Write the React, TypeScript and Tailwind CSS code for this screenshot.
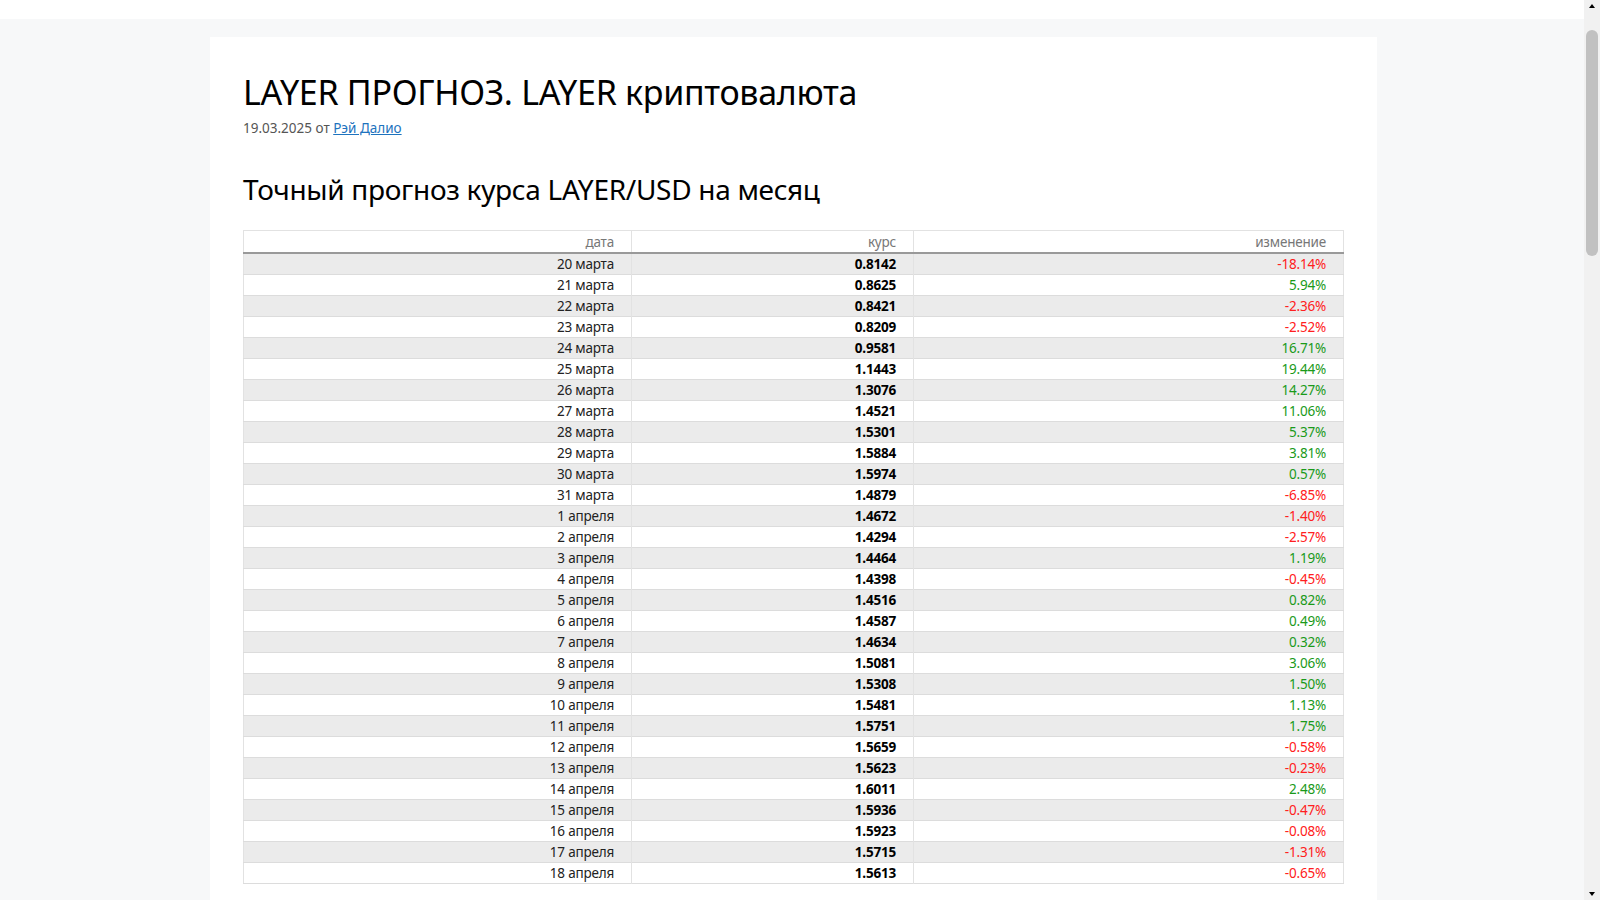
const rows: [string, string, string][] = [
  ["20 марта", "0.8142", "-18.14%"],
  ["21 марта", "0.8625", "5.94%"],
  ["22 марта", "0.8421", "-2.36%"],
  ["23 марта", "0.8209", "-2.52%"],
  ["24 марта", "0.9581", "16.71%"],
  ["25 марта", "1.1443", "19.44%"],
  ["26 марта", "1.3076", "14.27%"],
  ["27 марта", "1.4521", "11.06%"],
  ["28 марта", "1.5301", "5.37%"],
  ["29 марта", "1.5884", "3.81%"],
  ["30 марта", "1.5974", "0.57%"],
  ["31 марта", "1.4879", "-6.85%"],
  ["1 апреля", "1.4672", "-1.40%"],
  ["2 апреля", "1.4294", "-2.57%"],
  ["3 апреля", "1.4464", "1.19%"],
  ["4 апреля", "1.4398", "-0.45%"],
  ["5 апреля", "1.4516", "0.82%"],
  ["6 апреля", "1.4587", "0.49%"],
  ["7 апреля", "1.4634", "0.32%"],
  ["8 апреля", "1.5081", "3.06%"],
  ["9 апреля", "1.5308", "1.50%"],
  ["10 апреля", "1.5481", "1.13%"],
  ["11 апреля", "1.5751", "1.75%"],
  ["12 апреля", "1.5659", "-0.58%"],
  ["13 апреля", "1.5623", "-0.23%"],
  ["14 апреля", "1.6011", "2.48%"],
  ["15 апреля", "1.5936", "-0.47%"],
  ["16 апреля", "1.5923", "-0.08%"],
  ["17 апреля", "1.5715", "-1.31%"],
  ["18 апреля", "1.5613", "-0.65%"],
];

const cell = "p-0 pr-[17px] text-right leading-[20px] font-['Liberation_Sans',Arial,sans-serif]";

export default function App() {
  return (
    <div className="flex h-[900px] w-[1600px] overflow-hidden bg-[#f7f8f9] font-['Open_Sans',sans-serif]">
      <div className="flex-1">
        <div className="h-[19px] bg-white" />
        <div className="ml-[210px] mt-[18px] w-[1167px] bg-white px-[33px] pt-[33px]">
          <h1 className="text-[34px] font-normal leading-[44px] tracking-[-0.3px] text-black">
            LAYER ПРОГНОЗ. LAYER криптовалюта
          </h1>
          <p className="mt-[4px] text-[13.5px] text-[#555]">
            19.03.2025 от{" "}
            <a className="text-[#1e73be] underline" href="#">
              Рэй Далио
            </a>
          </p>
          <h2 className="mt-[31px] text-[28px] font-normal leading-[40px] tracking-[-0.3px] text-black">
            Точный прогноз курса LAYER/USD на месяц
          </h2>
          <table className="mt-[21px] w-[1101px] border-collapse border border-[#e2e2e2] text-[13.5px] tracking-[-0.2px]">
            <thead>
              <tr className="h-[22px] border-b-[2px] border-[#999] text-[#777]">
                <th className={`${cell} w-[388px] border-r border-[#e2e2e2] font-normal`}>дата</th>
                <th className={`${cell} w-[282px] border-r border-[#e2e2e2] font-normal`}>курс</th>
                <th className={`${cell} font-normal`}>изменение</th>
              </tr>
            </thead>
            <tbody>
              {rows.map(([d, r, c], i) => (
                <tr key={d} className={`h-[20px] border-b border-[#dcdcdc] ${i % 2 === 0 ? "bg-[#ebebeb]" : "bg-white"}`}>
                  <td className={`${cell} border-r border-[#e2e2e2] text-[#222]`}>{d}</td>
                  <td className={`${cell} border-r border-[#e2e2e2] font-bold text-black`}>{r}</td>
                  <td className={`${cell} ${c.startsWith("-") ? "text-[#ff2020]" : "text-[#1a9a1a]"}`}>{c}</td>
                </tr>
              ))}
            </tbody>
          </table>
          <div className="mx-[20px] mt-[16px] h-[20px] bg-gradient-to-b from-white to-[#fff7d0]" />
        </div>
      </div>
      <div className="relative w-[16px] bg-[#f1f1f1]">
        <div className="absolute left-[5px] top-[4px] h-0 w-0 border-x-[3px] border-b-[4px] border-x-transparent border-b-black" />
        <div className="absolute left-[2px] top-[30px] h-[226px] w-[12px] rounded-full bg-[#c1c1c1]" />
        <div className="absolute bottom-[4px] left-[5px] h-0 w-0 border-x-[3px] border-t-[4px] border-x-transparent border-t-black" />
      </div>
    </div>
  );
}
